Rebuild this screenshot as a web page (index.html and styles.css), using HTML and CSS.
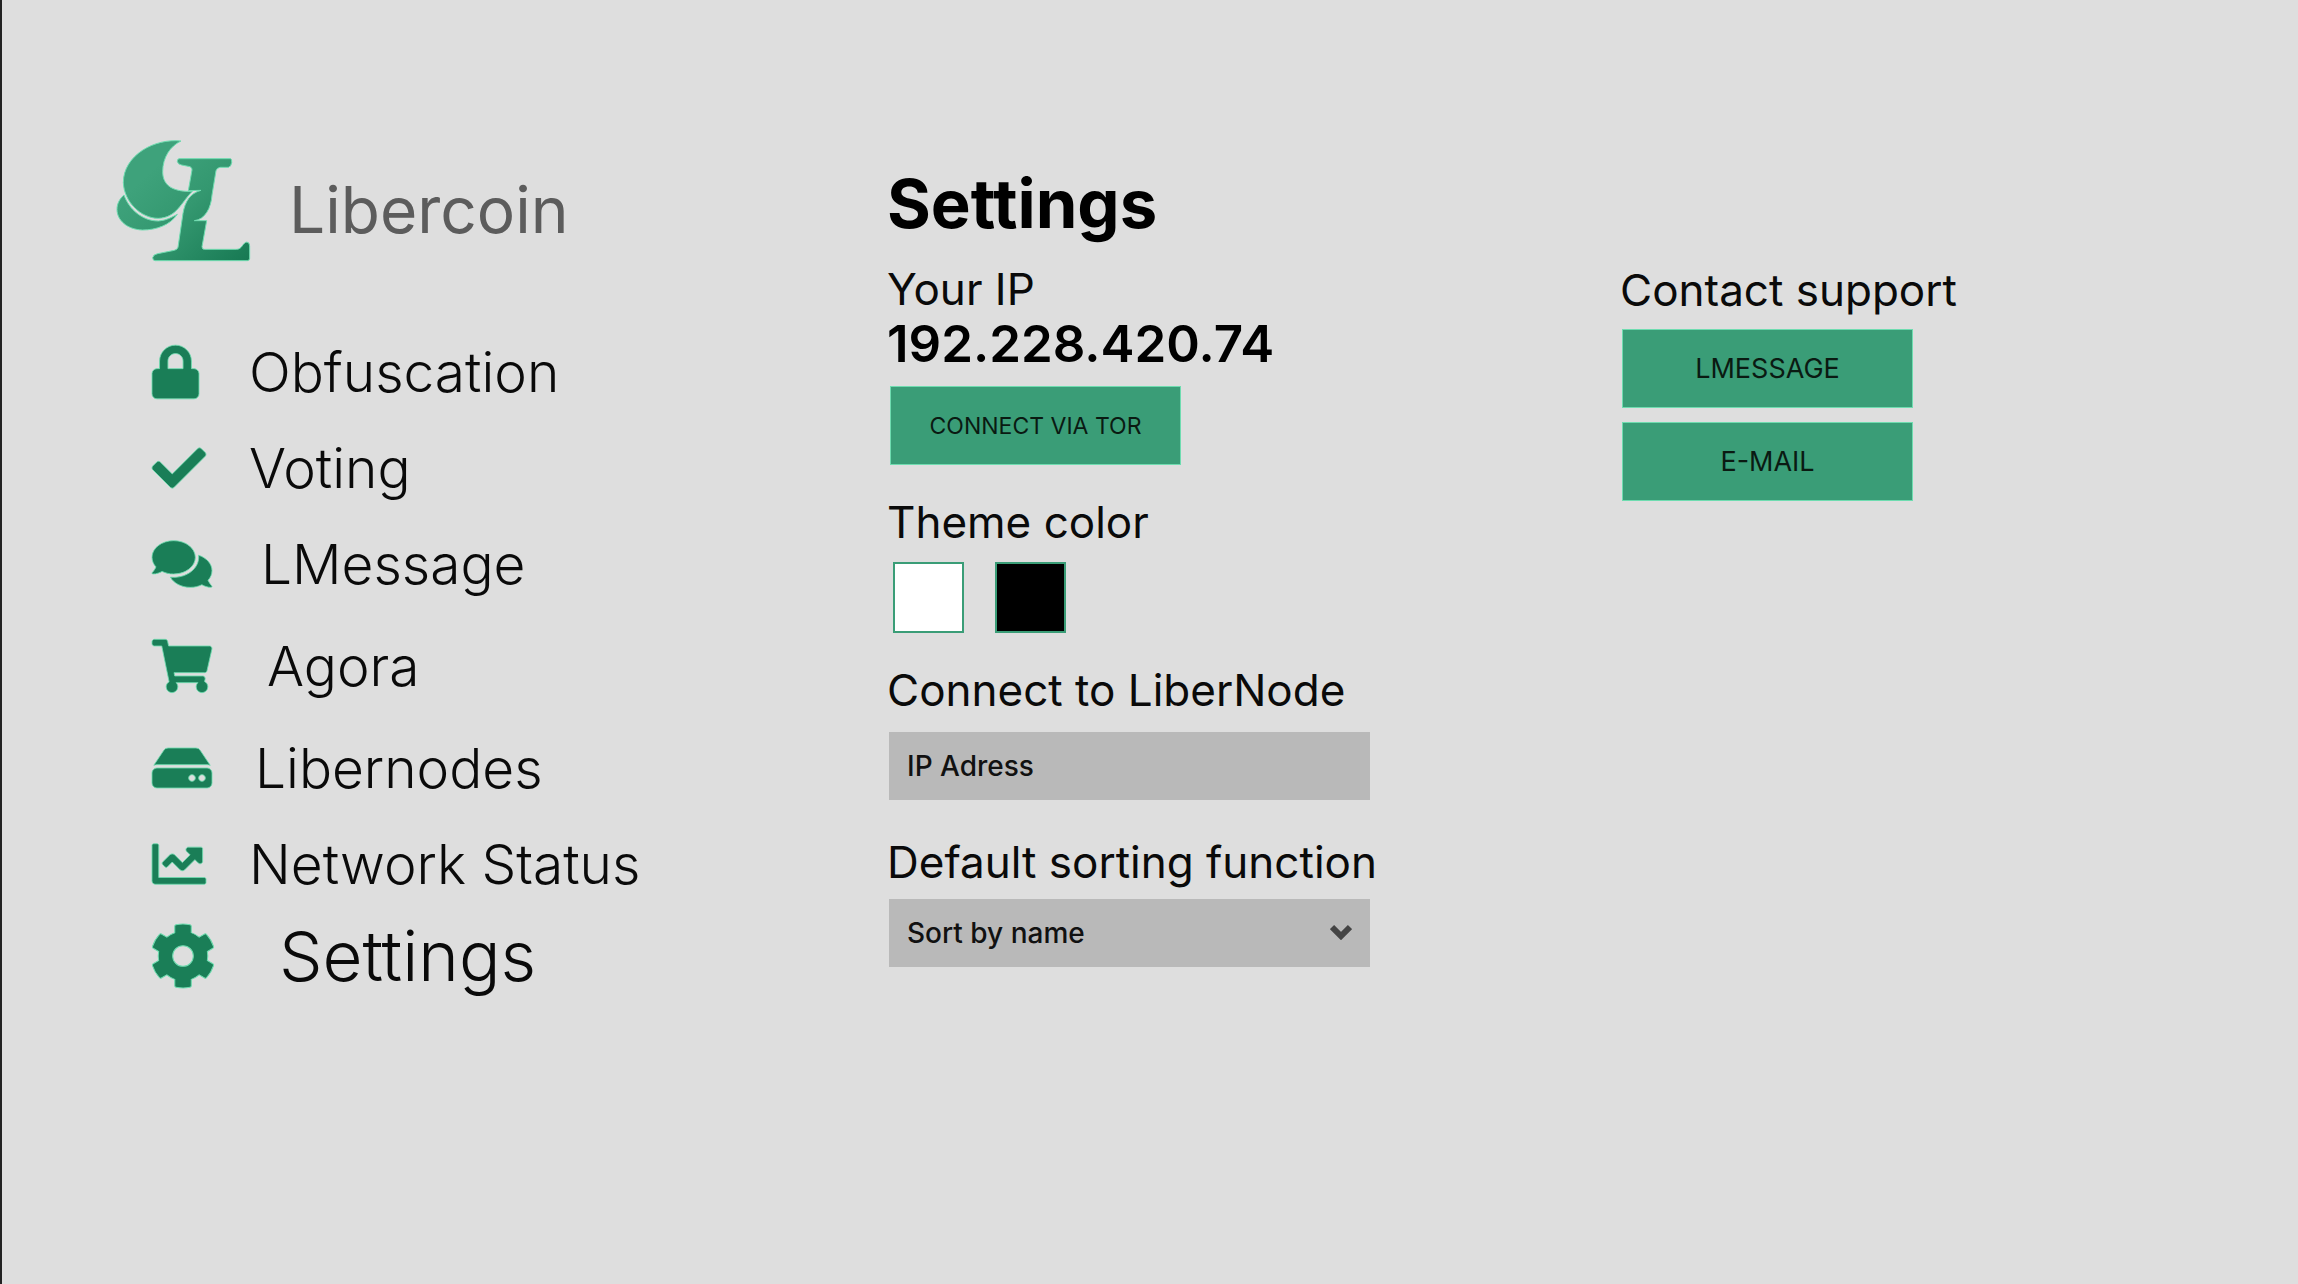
FILE: index.html
```html
<!DOCTYPE html>
<html lang="en">
<head>
<meta charset="utf-8">
<title>Libercoin – Settings</title>
<link rel="stylesheet" href="styles.css">
</head>
<body>
<div class="app">
  <aside class="sidebar">
    <a class="brand" href="#">
      <svg class="logo" viewBox="33 27 405 369" aria-hidden="true">
        <defs>
          <linearGradient id="leaf" gradientUnits="userSpaceOnUse" x1="130" y1="130" x2="400" y2="410">
            <stop offset="0" stop-color="#3ea27b"/>
            <stop offset=".4" stop-color="#349870"/>
            <stop offset="1" stop-color="#187a54"/>
          </linearGradient>
        </defs>
        <g fill="url(#leaf)" stroke="#6fdcb0" stroke-width="3">
          <path d="M228 33C150 24 55 75 55 158C57 215 108 265 160 265C215 263 228 218 262 184C212 186 173 172 173 125C173 82 196 48 228 33Z"/>
          <path d="M57 195C72 238 112 273 160 273C185 272 203 260 217 253C195 285 155 300 112 300C65 298 36 270 36 238C36 220 45 205 57 195Z"/>
          <path d="M222 86H377Q381 88 380 98Q378 110 370 112H345Q335 114 333 122L321 195C318 235 300 268 268 272H305L291 350Q291 358 298 358H395C412 358 412 338 426 336Q434 338 434 348V385Q434 392 427 392H150Q143 391 143 383Q145 373 158 371L208 361Q217 359 219 352L234 250C240 215 255 190 288 181L250 182L261 120Q262 113 255 110L230 105Q218 103 217 94Q217 87 222 86Z"/>
        </g>
      </svg>
      <span>Libercoin</span>
    </a>
    <nav>
      <ul class="menu">
        <li><a href="#">
          <span class="icon"><svg width="47" height="54" viewBox="0 0 448 512"><path d="M400 224h-24v-72C376 68.2 307.8 0 224 0S72 68.2 72 152v72H48c-26.5 0-48 21.5-48 48v192c0 26.5 21.5 48 48 48h352c26.5 0 48-21.5 48-48V272c0-26.5-21.5-48-48-48zm-104 0H152v-72c0-39.7 32.3-72 72-72s72 32.3 72 72v72z"/></svg></span>
          <span>Obfuscation</span></a></li>
        <li><a href="#">
          <span class="icon"><svg width="54" height="54" viewBox="0 0 512 512"><path d="M173.898 439.404l-166.4-166.4c-9.997-9.997-9.997-26.206 0-36.204l36.203-36.204c9.997-9.998 26.207-9.998 36.204 0L192 312.69 432.095 72.596c9.997-9.997 26.207-9.997 36.204 0l36.203 36.204c9.997 9.997 9.997 26.206 0 36.204l-294.4 294.401c-9.998 9.997-26.207 9.997-36.204-.001z"/></svg></span>
          <span>Voting</span></a></li>
        <li><a class="indent-2" href="#">
          <span class="icon"><svg width="60" height="54" viewBox="0 0 576 512"><path d="M416 192c0-88.4-93.1-160-208-160S0 103.6 0 192c0 34.3 14.1 65.9 38 92-13.4 30.2-35.5 54.2-35.8 54.5-2.2 2.3-2.8 5.7-1.5 8.7S4.8 352 8 352c36.6 0 66.9-12.3 88.7-25 32.2 15.7 70.3 25 111.3 25 114.9 0 208-71.6 208-160zm122 220c23.9-26 38-57.7 38-92 0-66.9-53.5-124.2-129.3-148.1.9 6.6 1.3 13.3 1.3 20.1 0 105.9-107.7 192-240 192-10.8 0-21.3-.8-31.7-1.9C207.8 439.6 281.8 480 368 480c41 0 79.1-9.2 111.3-25 21.8 12.7 52.1 25 88.7 25 3.2 0 6.1-1.9 7.3-4.8 1.3-2.9.7-6.3-1.5-8.7-.3-.3-22.4-24.2-35.8-54.5z"/></svg></span>
          <span>LMessage</span></a></li>
        <li class="spaced"><a class="indent-3" href="#">
          <span class="icon"><svg width="60" height="54" viewBox="0 0 576 512"><path d="M528.12 301.319l47.273-208C578.806 78.301 567.391 64 551.99 64H159.208l-9.166-44.81C147.758 8.021 137.93 0 126.529 0H24C10.745 0 0 10.745 0 24v16c0 13.255 10.745 24 24 24h69.883l70.248 343.435C147.325 417.1 136 435.222 136 456c0 30.928 25.072 56 56 56s56-25.072 56-56c0-15.674-6.447-29.835-16.824-40h209.647C430.447 426.165 424 440.326 424 456c0 30.928 25.072 56 56 56s56-25.072 56-56c0-22.172-12.888-41.332-31.579-50.405l5.517-24.276c3.413-15.018-8.002-29.319-23.403-29.319H218.117l-6.545-32h293.145c11.206 0 20.92-7.754 23.403-18.681z"/></svg></span>
          <span>Agora</span></a></li>
        <li class="spaced"><a class="indent-1" href="#">
          <span class="icon"><svg width="60" height="54" viewBox="0 0 576 512"><path d="M576 304v96c0 26.51-21.49 48-48 48H48c-26.51 0-48-21.49-48-48v-96c0-26.51 21.49-48 48-48h480c26.51 0 48 21.49 48 48zm-48-80a79.557 79.557 0 0 1 30.777 6.165L462.25 85.374A48.003 48.003 0 0 0 422.311 64H153.689a48 48 0 0 0-39.938 21.374L17.223 230.165A79.557 79.557 0 0 1 48 224h480zm-48 96c-17.673 0-32 14.327-32 32s14.327 32 32 32 32-14.327 32-32-14.327-32-32-32zm-96 0c-17.673 0-32 14.327-32 32s14.327 32 32 32 32-14.327 32-32-14.327-32-32-32z"/></svg></span>
          <span>Libernodes</span></a></li>
        <li><a href="#">
          <span class="icon"><svg width="54" height="54" viewBox="0 0 512 512"><path d="M496 384H64V80c0-8.84-7.16-16-16-16H16C7.16 64 0 71.16 0 80v336c0 17.67 14.33 32 32 32h464c8.84 0 16-7.16 16-16v-32c0-8.84-7.16-16-16-16zM464 96H345.94c-21.38 0-32.09 25.85-16.97 40.97l32.4 32.4L288 242.75l-73.37-73.37c-12.5-12.5-32.76-12.5-45.25 0l-68.69 68.69c-6.25 6.25-6.25 16.38 0 22.63l22.62 22.62c6.25 6.25 16.38 6.25 22.63 0L192 237.25l73.37 73.37c12.5 12.5 32.76 12.5 45.25 0l96-96 32.4 32.4c15.12 15.12 40.97 4.41 40.97-16.97V112c.01-8.84-7.15-16-15.99-16z"/></svg></span>
          <span>Network Status</span></a></li>
        <li class="current"><a class="indent-5" href="#" aria-current="page">
          <span class="icon"><svg width="62" height="64" viewBox="18 8 476 496"><path d="M487.4 315.7l-42.6-24.6c4.3-23.2 4.3-47 0-70.2l42.6-24.6c4.9-2.8 7.1-8.6 5.5-14-11.1-35.6-30-67.8-54.7-94.6-3.8-4.1-10-5.1-14.8-2.3L380.8 110c-17.9-15.4-38.5-27.3-60.8-35.1V25.8c0-5.6-3.9-10.5-9.4-11.7-36.7-8.2-74.3-7.8-109.2 0-5.5 1.2-9.4 6.1-9.4 11.7V75c-22.2 7.9-42.8 19.8-60.8 35.1L88.7 85.5c-4.9-2.8-11-1.9-14.8 2.3-24.7 26.7-43.6 58.9-54.7 94.6-1.7 5.4.6 11.2 5.5 14L67.3 221c-4.3 23.2-4.3 47 0 70.2l-42.6 24.6c-4.9 2.8-7.1 8.6-5.5 14 11.1 35.6 30 67.8 54.7 94.6 3.8 4.1 10 5.1 14.8 2.3l42.6-24.6c17.9 15.4 38.5 27.3 60.8 35.1v49.2c0 5.6 3.9 10.5 9.4 11.7 36.7 8.2 74.3 7.8 109.2 0 5.5-1.2 9.4-6.1 9.4-11.7v-49.2c22.2-7.9 42.8-19.8 60.8-35.1l42.6 24.6c4.9 2.8 11 1.9 14.8-2.3 24.7-26.7 43.6-58.9 54.7-94.6 1.5-5.5-.7-11.3-5.6-14.1zM256 336c-44.1 0-80-35.9-80-80s35.9-80 80-80 80 35.9 80 80-35.9 80-80 80z"/></svg></span>
          <span>Settings</span></a></li>
      </ul>
    </nav>
  </aside>

  <main class="settings">
    <h1>Settings</h1>
    <section class="ip">
      <h2>Your IP</h2>
      <p class="address">192.228.420.74</p>
      <button class="button small" type="button">CONNECT VIA TOR</button>
    </section>
    <fieldset class="theme">
      <legend>Theme color</legend>
      <div class="swatches">
        <input class="swatch light" type="radio" name="theme" value="light" aria-label="White" checked>
        <input class="swatch dark" type="radio" name="theme" value="dark" aria-label="Black">
      </div>
    </fieldset>
    <div class="field">
      <label for="node">Connect to LiberNode</label>
      <input class="control" id="node" type="text" placeholder="IP Adress">
    </div>
    <div class="field sorting">
      <label for="sort">Default sorting function</label>
      <div class="select">
        <select class="control" id="sort"><option>Sort by name</option></select>
        <svg class="chevron" width="22" height="16" viewBox="0 0 22 16" aria-hidden="true"><path d="M2 3L11 12L20 3"/></svg>
      </div>
    </div>
  </main>

  <section class="support">
    <h2>Contact support</h2>
    <button class="button" type="button">LMESSAGE</button>
    <button class="button" type="button">E-MAIL</button>
  </section>
</div>
</body>
</html>
```
FILE: styles.css
```css
* { box-sizing: border-box; }

body {
  margin: 0;
  background: #dedede;
  color: #0a0a0a;
  font-family: Inter, "Liberation Sans", sans-serif;
}

a { color: inherit; text-decoration: none; }

h1, h2, p, ul, fieldset, legend { margin: 0; padding: 0; border: 0; }

.app {
  display: grid;
  grid-template-columns: 885fr 733fr 678fr;
  min-height: 100vh;
  border-left: 2px solid #222;
}

/* Sidebar */
.sidebar { padding: 139px 40px 40px 114px; }

.brand {
  display: flex;
  align-items: center;
  gap: 38px;
  color: #5c5c5c;
  font-size: 64px;
  font-weight: 400;
  line-height: 80px;
}

.brand span { padding-top: 18px; }

.logo { width: 135px; height: 123px; }

.menu { list-style: none; padding: 62px 0 0 36px; }

.menu a {
  display: flex;
  align-items: center;
  height: 96px;
  font-size: 55px;
  font-weight: 300;
  white-space: nowrap;
}

.menu .spaced { margin-top: 6px; }

.menu .current a { height: 88px; font-size: 69px; }

.icon { display: flex; width: 97px; }

.icon svg {
  fill: #1a7e57;
  stroke: #6fdcb0;
  stroke-width: 8px;
  overflow: visible;
}

.indent-1 { gap: 6px; }
.indent-2 { gap: 12px; }
.indent-3 { gap: 18px; }
.indent-5 { gap: 30px; }

/* Settings column */
.settings { padding-top: 164px; }

h1 { color: #000; font-size: 67px; font-weight: 700; line-height: 80px; }

h2, legend, label {
  display: block;
  font-size: 44px;
  font-weight: 400;
  line-height: 50px;
}

.ip { padding-top: 20px; }

.address {
  color: #000;
  font-size: 51px;
  font-weight: 600;
  line-height: 60px;
}

.button {
  display: block;
  width: 291px;
  height: 79px;
  padding: 0;
  border: 1px solid #6fdcb0;
  background: #3a9d77;
  color: #0a1a12;
  font: 400 27px Inter, "Liberation Sans", sans-serif;
}

.button.small { font-size: 23px; }

.ip .button { margin: 12px 0 0 3px; }

.theme { margin-top: 32px; }

.swatches { display: flex; gap: 31px; padding: 15px 0 0 6px; }

.swatch {
  appearance: none;
  width: 71px;
  height: 71px;
  margin: 0;
  border: 2px solid #3a9d77;
}

.light { background: #fff; }
.dark { background: #000; }

.field { padding-top: 32px; }

.control {
  appearance: none;
  display: block;
  width: 481px;
  height: 68px;
  margin: 17px 0 0 2px;
  padding: 0 18px;
  border: 0;
  border-radius: 0;
  background: #b9b9b9;
  color: #111;
  font: 500 28px Inter, "Liberation Sans", sans-serif;
}

.control::placeholder { color: #111; opacity: 1; }

.sorting { padding-top: 37px; }
.sorting .control { margin-top: 12px; }

.select { position: relative; width: 483px; }

.chevron {
  position: absolute;
  right: 18px;
  top: 25px;
  fill: none;
  stroke: #444;
  stroke-width: 6px;
}

/* Support column */
.support { padding-top: 265px; }
.support .button { margin: 14px 0 0 2px; }
```
